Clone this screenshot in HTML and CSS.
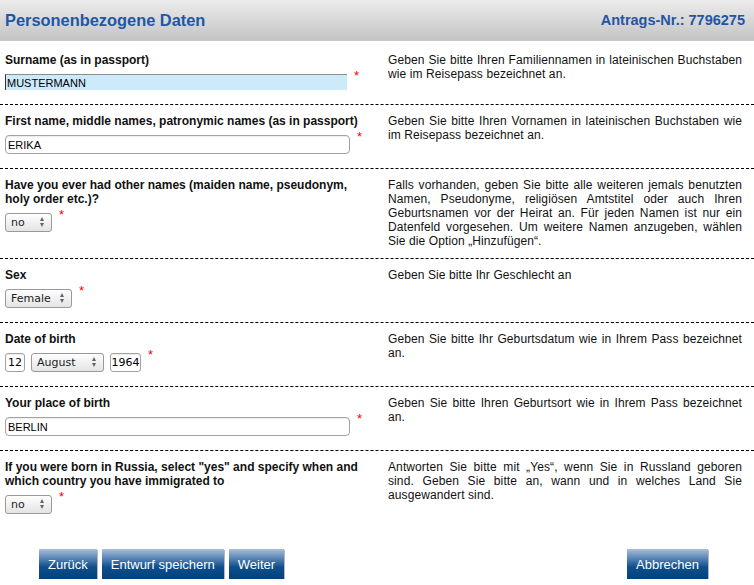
FILE: index.html
```html
<!DOCTYPE html>
<html lang="de">
<head>
    <meta charset="UTF-8">
    <meta name="viewport" content="width=device-width, initial-scale=1.0">
    <title>Personenbezogene Daten</title>
    <link rel="stylesheet" href="styles.css">
</head>
<body>
    <header class="head">
        <h1 class="title">Personenbezogene Daten</h1>
        <span class="app-no">Antrags-Nr.: 7796275</span>
    </header>

    <form class="form" id="personForm">
        <div class="row first">
            <div class="field-cell">
                <label class="label" for="surname">Surname (as in passport)</label>
                <div class="line">
                    <input class="text active" type="text" id="surname" name="surname" value="MUSTERMANN">
                    <span class="req">*</span>
                </div>
            </div>
            <p class="hint">Geben Sie bitte Ihren Familiennamen in lateinischen Buchstaben wie im Reisepass bezeichnet an.</p>
        </div>

        <div class="row">
            <div class="field-cell">
                <label class="label" for="firstname">First name, middle names, patronymic names (as in passport)</label>
                <div class="line">
                    <input class="text wide" type="text" id="firstname" name="firstname" value="ERIKA">
                    <span class="req">*</span>
                </div>
            </div>
            <p class="hint">Geben Sie bitte Ihren Vornamen in lateinischen Buchstaben wie im Reisepass bezeichnet an.</p>
        </div>

        <div class="row">
            <div class="field-cell">
                <label class="label" for="othernames">Have you ever had other names (maiden name, pseudonym, holy order etc.)?</label>
                <div class="line">
                    <span class="sel">
                        <select class="w-no" id="othernames" name="othernames">
                            <option>no</option>
                            <option>yes</option>
                        </select>
                    </span>
                    <span class="req">*</span>
                </div>
            </div>
            <p class="hint">Falls vorhanden, geben Sie bitte alle weiteren jemals benutzten Namen, Pseudonyme, religiösen Amtstitel oder auch Ihren Geburtsnamen vor der Heirat an. Für jeden Namen ist nur ein Datenfeld vorgesehen. Um weitere Namen anzugeben, wählen Sie die Option „Hinzufügen“.</p>
        </div>

        <div class="row">
            <div class="field-cell">
                <label class="label" for="sex">Sex</label>
                <div class="line">
                    <span class="sel">
                        <select class="w-sex" id="sex" name="sex">
                            <option>Female</option>
                            <option>Male</option>
                        </select>
                    </span>
                    <span class="req">*</span>
                </div>
            </div>
            <p class="hint">Geben Sie bitte Ihr Geschlecht an</p>
        </div>

        <div class="row">
            <div class="field-cell">
                <label class="label" for="day">Date of birth</label>
                <div class="line">
                    <input class="text num day" type="text" id="day" name="day" value="12">
                    <span class="sel">
                        <select class="w-month" id="month" name="month">
                            <option>August</option>
                        </select>
                    </span>
                    <input class="text num year" type="text" id="year" name="year" value="1964">
                    <span class="req">*</span>
                </div>
            </div>
            <p class="hint">Geben Sie bitte Ihr Geburtsdatum wie in Ihrem Pass bezeichnet an.</p>
        </div>

        <div class="row">
            <div class="field-cell">
                <label class="label" for="birthplace">Your place of birth</label>
                <div class="line">
                    <input class="text wide" type="text" id="birthplace" name="birthplace" value="BERLIN">
                    <span class="req">*</span>
                </div>
            </div>
            <p class="hint">Geben Sie bitte Ihren Geburtsort wie in Ihrem Pass bezeichnet an.</p>
        </div>

        <div class="row">
            <div class="field-cell">
                <label class="label" for="russia">If you were born in Russia, select "yes" and specify when and which country you have immigrated to</label>
                <div class="line">
                    <span class="sel">
                        <select class="w-no" id="russia" name="russia">
                            <option>no</option>
                            <option>yes</option>
                        </select>
                    </span>
                    <span class="req">*</span>
                </div>
            </div>
            <p class="hint">Antworten Sie bitte mit „Yes“, wenn Sie in Russland geboren sind. Geben Sie bitte an, wann und in welches Land Sie ausgewandert sind.</p>
        </div>
    </form>

    <div class="actions">
        <button type="button" class="btn">Zurück</button>
        <button type="button" class="btn">Entwurf speichern</button>
        <button type="button" class="btn">Weiter</button>
        <button type="button" class="btn btn-cancel">Abbrechen</button>
    </div>
</body>
</html>
```

FILE: styles.css
```css
body {
    margin: 0;
    font-family: "Liberation Sans", Arial, sans-serif;
    color: #111;
    background: #fff;
}

.head {
    height: 40px;
    display: flex;
    justify-content: space-between;
    align-items: center;
    padding: 0 9px 0 5px;
    background: linear-gradient(#ececec, #c4c4c4);
    border-bottom: 1px solid #c9c9c9;
}

.title {
    margin: 0;
    font-size: 16.4px;
    font-weight: bold;
    color: #1f56a5;
}

.app-no {
    font-size: 14.5px;
    font-weight: bold;
    color: #1f56a5;
}

.row {
    display: grid;
    grid-template-columns: 383px 1fr;
    border-bottom: 1px dashed #000;
}

.row:last-child {
    border-bottom: none;
}

.field-cell {
    padding: 9px 18px 14px 5px;
}

.hint {
    margin: 0;
    padding: 9px 12px 10px 5px;
    font-size: 12px;
    line-height: 14px;
    letter-spacing: 0.1px;
    text-align: justify;
}

.first .field-cell,
.first .hint {
    padding-top: 12px;
}

.label {
    display: block;
    font-size: 12px;
    line-height: 14px;
    font-weight: bold;
    margin-bottom: 7px;
}

.line {
    display: flex;
    align-items: flex-start;
    gap: 6px;
}

.req {
    color: #f00;
    font-size: 13px;
    line-height: 10px;
    margin-top: -3px;
    margin-left: 1px;
}

.text {
    box-sizing: border-box;
    height: 19px;
    margin: 0;
    padding: 0 2px;
    border: 1px solid #a3a3a3;
    border-radius: 4px;
    background: #fff;
    box-shadow: inset 0 1px 1px rgba(0, 0, 0, 0.08);
    font: 11px "Liberation Sans", Arial, sans-serif;
    color: #000;
    outline: none;
}

.wide {
    width: 345px;
}

.active {
    width: 342px;
    height: 16px;
    border: none;
    border-top: 1px solid #8c8c8c;
    border-left: 1px solid #333;
    border-radius: 0;
    background: #cdeafa;
    box-shadow: none;
    padding: 0 1px;
}

.num {
    font-family: "DejaVu Sans", sans-serif;
    text-align: center;
    padding: 0;
    border-radius: 3px;
}

.day {
    width: 20px;
}

.year {
    width: 31px;
}

.sel {
    position: relative;
    display: inline-block;
}

.sel select {
    -webkit-appearance: none;
    appearance: none;
    display: block;
    box-sizing: border-box;
    height: 19px;
    margin: 0;
    padding: 0 14px 0 5px;
    border: 1px solid #9a9a9a;
    border-radius: 3px;
    background: linear-gradient(#fefefe, #e4e4e4);
    font: 11px "DejaVu Sans", sans-serif;
    color: #222;
    outline: none;
}

.sel::before,
.sel::after {
    content: "";
    position: absolute;
    right: 8px;
    border-left: 2.5px solid transparent;
    border-right: 2.5px solid transparent;
    pointer-events: none;
}

.sel::before {
    top: 4px;
    border-bottom: 4px solid #666;
}

.sel::after {
    top: 10px;
    border-top: 4px solid #666;
}

.w-no {
    width: 47px;
}

.w-sex {
    width: 67px;
}

.w-month {
    width: 73px;
}

.actions {
    display: flex;
    gap: 5px;
    padding: 21px 46px 0 39px;
}

.btn {
    height: 30px;
    padding: 0 9px;
    border: none;
    color: #fff;
    font: 13px "Liberation Sans", Arial, sans-serif;
    background: linear-gradient(#a9bfdc 0%, #5c86b6 30%, #0f4f8c 60%, #00427c 100%);
    box-shadow: 1px 1px 0 #b8b8b8;
    cursor: pointer;
}

.btn-cancel {
    margin-left: auto;
}
```
